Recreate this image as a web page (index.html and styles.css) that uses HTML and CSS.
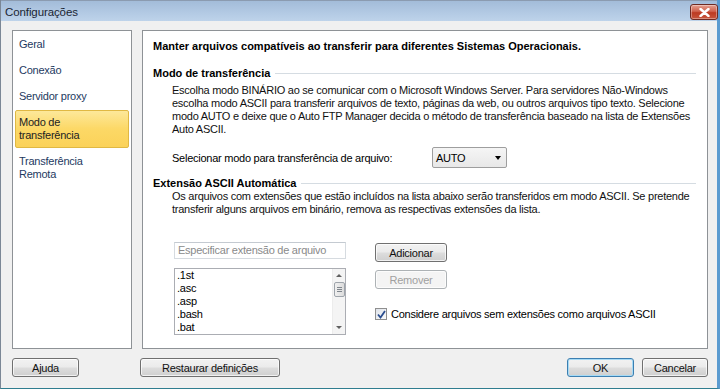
FILE: index.html
```html
<!DOCTYPE html>
<html lang="pt">
<head>
<meta charset="utf-8">
<title>Configurações</title>
<link rel="stylesheet" href="styles.css">
</head>
<body>
<div class="window">
  <div class="titlebar">
    <span class="title">Configurações</span>
    <button class="close" aria-label="Fechar">
      <svg width="11" height="9" viewBox="0 0 11 9"><path d="M1.5 1 L9.5 8 M9.5 1 L1.5 8" stroke="#fff" stroke-width="2.4" stroke-linecap="round"/></svg>
    </button>
  </div>
  <div class="client">
    <div class="panes">
      <ul class="nav">
        <li class="nav-item">Geral</li>
        <li class="nav-item">Conexão</li>
        <li class="nav-item">Servidor proxy</li>
        <li class="nav-item selected">Modo de<br>transferência</li>
        <li class="nav-item">Transferência<br>Remota</li>
      </ul>
      <div class="content">
        <h1 class="heading">Manter arquivos compatíveis ao transferir para diferentes Sistemas Operacionais.</h1>
        <h2 class="legend legend-mode">Modo de transferência</h2>
        <p class="para para-mode">Escolha modo BINÁRIO ao se comunicar com o Microsoft Windows Server. Para servidores Não-Windows escolha modo ASCII para transferir arquivos de texto, páginas da web, ou outros arquivos tipo texto. Selecione modo AUTO e deixe que o Auto FTP Manager decida o método de transferência baseado na lista de Extensões Auto ASCII.</p>
        <div class="select-row">
          <span class="select-label">Selecionar modo para transferência de arquivo:</span>
          <div class="combo"><span>AUTO</span><span class="combo-arrow"></span></div>
        </div>
        <h2 class="legend legend-ext">Extensão ASCII Automática</h2>
        <p class="para para-ext">Os arquivos com extensões que estão incluídos na lista abaixo serão transferidos em modo ASCII. Se pretende transferir alguns arquivos em binário, remova as respectivas extensões da lista.</p>
        <div class="ext-area">
          <div class="ext-left">
            <div class="textbox">Especificar extensão de arquivo</div>
            <div class="listbox">
              <ul class="list">
                <li>.1st</li>
                <li>.asc</li>
                <li>.asp</li>
                <li>.bash</li>
                <li>.bat</li>
              </ul>
              <div class="scrollbar">
                <span class="arrow-up"></span>
                <span class="thumb"><i></i><i></i><i></i></span>
                <span class="track"></span>
                <span class="arrow-down"></span>
              </div>
            </div>
          </div>
          <div class="ext-right">
            <button class="btn btn-add">Adicionar</button>
            <button class="btn btn-remove" disabled>Remover</button>
            <label class="check-row">
              <span class="checkbox">
                <svg width="9" height="9" viewBox="0 0 9 9"><path d="M1 4.5 L3.5 7.5 L8 1" fill="none" stroke="#2a4d8f" stroke-width="1.8"/></svg>
              </span>
              <span>Considere arquivos sem extensões como arquivos ASCII</span>
            </label>
          </div>
        </div>
      </div>
    </div>
    <div class="footer">
      <button class="btn btn-help">Ajuda</button>
      <button class="btn btn-restore">Restaurar definições</button>
      <span class="spacer"></span>
      <button class="btn btn-ok">OK</button>
      <button class="btn btn-cancel">Cancelar</button>
    </div>
  </div>
</div>
</body>
</html>
```

FILE: styles.css
```css
* { box-sizing: border-box; }
html, body { margin: 0; padding: 0; }
body {
  width: 720px;
  height: 389px;
  overflow: hidden;
  font-family: "Liberation Sans", Arial, sans-serif;
  font-size: 11px;
  letter-spacing: -0.25px;
  color: #000;
  background: #f0f0f0;
}
.window {
  width: 720px;
  height: 389px;
  display: flex;
  flex-direction: column;
  border-left: 1px solid #7b8796;
  border-right: 3px solid #5b9bd0;
  border-bottom: 1px solid #2f7d8f;
  background: #f0f0f0;
}
.titlebar {
  height: 21px;
  flex: none;
  display: flex;
  align-items: center;
  justify-content: space-between;
  padding: 0 0 0 4px;
  border-top: 1px solid #8b9bb0;
  background: linear-gradient(#a3bcd9, #b3cae4 60%, #bed3ea);
}
.title {
  font-family: "Liberation Sans", Arial, sans-serif;
  font-size: 11.5px;
  letter-spacing: -0.1px;
  color: #1b2533;
  padding-top: 1px;
}
.close {
  width: 28px;
  height: 16px;
  margin-top: 2px;
  margin-right: -1px;
  padding: 0;
  display: flex;
  align-items: center;
  justify-content: center;
  border: 1px solid #6e2a22;
  border-radius: 3px;
  background: linear-gradient(#e6a091, #d0634e 45%, #bc3a22 55%, #c8563d);
  box-shadow: inset 0 0 0 1px rgba(255,255,255,0.35);
}
.client {
  flex: 1;
  display: flex;
  flex-direction: column;
  padding: 9px 9px 0 11px;
}
.panes {
  display: flex;
  gap: 10px;
  height: 319px;
}
.nav {
  list-style: none;
  margin: 0;
  width: 120px;
  flex: none;
  padding: 1px 2px;
  background: #fff;
  border: 1px solid #8e9296;
}
.nav-item {
  border: 1px solid transparent;
  border-radius: 2px;
  padding: 5px 3px;
  margin-bottom: 1px;
  line-height: 13px;
  color: #1e3a5f;
}
.nav-item.selected {
  background: linear-gradient(#fde89a, #fcd866 50%, #fbd259);
  border-color: #e0b843;
  color: #222;
}
.content {
  flex: none;
  width: 566px;
  background: #fff;
  border: 1px solid #8e9296;
  padding: 8px 11px 0 10px;
}
.heading {
  margin: 0;
  font-size: 11px;
  font-weight: bold;
  letter-spacing: 0;
  line-height: 14px;
}
.legend {
  margin: 0;
  font-size: 11px;
  font-weight: bold;
  letter-spacing: 0;
  line-height: 14px;
  display: flex;
  align-items: center;
  gap: 5px;
}
.legend::after {
  content: "";
  flex: 1;
  height: 1px;
  background: #d5dce2;
  margin-top: 1px;
}
.legend-mode { margin-top: 13px; }
.legend-ext { margin-top: 8px; }
.para {
  margin: 0;
  padding-left: 19px;
  line-height: 13px;
  color: #111;
}
.para-mode { margin-top: 4px; }
.para-ext { margin-top: 0; }
.select-row {
  margin-top: 11px;
  padding-left: 19px;
  display: flex;
  align-items: center;
}
.select-label { width: 260px; }
.combo {
  width: 75px;
  height: 21px;
  display: flex;
  align-items: center;
  justify-content: space-between;
  padding: 0 5px 0 3px;
  border: 1px solid #9e9e9e;
  border-radius: 2px;
  background: linear-gradient(#f5f5f5, #e8e8e8);
}
.combo-arrow {
  width: 0;
  height: 0;
  border-left: 3.5px solid transparent;
  border-right: 3.5px solid transparent;
  border-top: 4px solid #000;
}
.ext-area {
  margin-top: 26px;
  padding-left: 21px;
  display: flex;
  gap: 29px;
}
.ext-left {
  width: 172px;
  display: flex;
  flex-direction: column;
  gap: 9px;
}
.textbox {
  height: 17px;
  line-height: 15px;
  padding: 0 3px;
  border: 1px solid #d6dbe0;
  border-top-color: #c4cad1;
  color: #8a8a8a;
}
.listbox {
  height: 67px;
  border: 1px solid #abadb3;
  display: flex;
}
.list {
  list-style: none;
  margin: 0;
  padding: 0 2px;
  flex: 1;
}
.list li {
  line-height: 13px;
}
.scrollbar {
  width: 13px;
  display: flex;
  flex-direction: column;
  align-items: center;
  background: #f4f4f4;
  border-left: 1px solid #ececec;
}
.arrow-up, .arrow-down {
  width: 13px;
  height: 13px;
  display: flex;
  align-items: center;
  justify-content: center;
}
.arrow-up::before {
  content: "";
  border-left: 3px solid transparent;
  border-right: 3px solid transparent;
  border-bottom: 3px solid #606060;
}
.arrow-down::before {
  content: "";
  border-left: 3px solid transparent;
  border-right: 3px solid transparent;
  border-top: 3px solid #606060;
}
.thumb {
  width: 11px;
  height: 15px;
  border: 1px solid #9ea4ab;
  border-radius: 2px;
  background: linear-gradient(90deg, #f0f0f0, #dcdcdc);
  display: flex;
  flex-direction: column;
  align-items: center;
  justify-content: center;
  gap: 1px;
}
.thumb i {
  display: block;
  width: 5px;
  height: 1px;
  background: #7f858c;
}
.track { flex: 1; }
.ext-right {
  display: flex;
  flex-direction: column;
  align-items: flex-start;
}
.btn {
  font-family: "Liberation Sans", Arial, sans-serif;
  font-size: 11px;
  letter-spacing: -0.25px;
  height: 19px;
  padding: 0;
  color: #111;
  border: 1px solid #707070;
  border-radius: 3px;
  background: linear-gradient(#f2f2f2, #ebebeb 48%, #dddddd 52%, #cfcfcf);
  box-shadow: inset 0 0 0 1px rgba(255,255,255,0.7);
}
.btn-add { width: 72px; margin-top: 1px; }
.btn-remove {
  width: 72px;
  margin-top: 8px;
  color: #a0a0a0;
  border-color: #adb2b5;
  background: #f4f4f4;
}
.check-row {
  margin-top: 19px;
  display: flex;
  align-items: center;
  gap: 4px;
}
.checkbox {
  width: 12px;
  height: 12px;
  border: 1px solid #8f8f8f;
  background: linear-gradient(135deg, #dfe3ea, #fafbfc);
  display: flex;
  align-items: center;
  justify-content: center;
}
.footer {
  display: flex;
  align-items: flex-start;
  padding-top: 9px;
}
.btn-help { width: 67px; }
.btn-restore { width: 140px; margin-left: 61px; }
.spacer { flex: 1; }
.btn-ok {
  width: 67px;
  border-color: #3c7fb1;
  box-shadow: inset 0 0 0 1px #a6daf5;
}
.btn-cancel { width: 66px; margin-left: 8px; }
```
